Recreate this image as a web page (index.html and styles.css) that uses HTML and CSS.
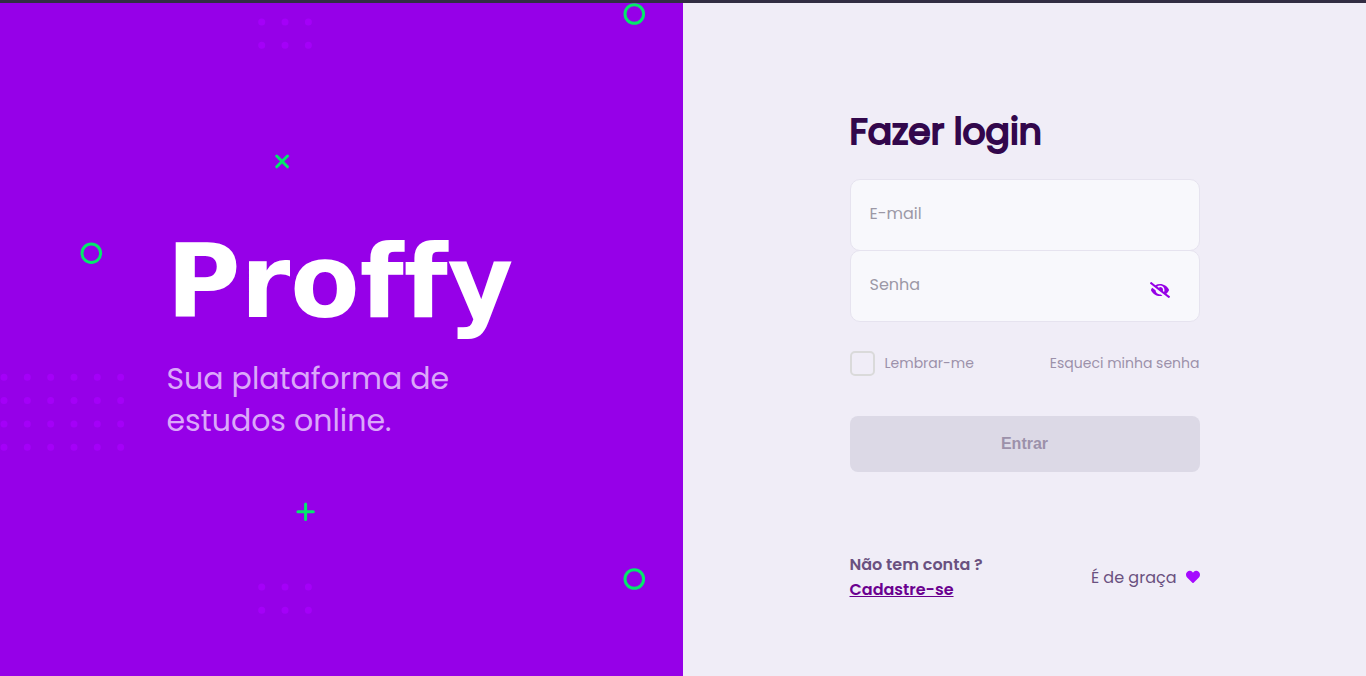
FILE: index.html
```html
<!DOCTYPE html>
<html lang="pt-BR">
<head>
<meta charset="utf-8">
<meta name="viewport" content="width=device-width, initial-scale=1">
<title>Proffy - Login</title>
<link rel="stylesheet" href="styles.css">
</head>
<body>
<div class="page">
  <section class="hero">
    <svg class="hero-shapes" viewBox="0 0 683 673" preserveAspectRatio="xMidYMid slice" aria-hidden="true">
      <g class="dots">
        <path d="M4 374.3H122M4 397.6H122M4 421H122M4 444.3H122"/>
        <path d="M261.7 19H309M261.7 42.3H309"/>
        <path d="M261.7 584H309M261.7 607.3H309"/>
      </g>
      <g class="marks">
        <circle cx="634.3" cy="11" r="9.3"/>
        <circle cx="91.3" cy="250.2" r="9.3"/>
        <circle cx="634.3" cy="576" r="9.3"/>
        <path d="M276.7 153L287.5 163.8M287.5 153L276.7 163.8"/>
        <path d="M305.6 501V516.4M297.9 508.7H313.3"/>
      </g>
    </svg>
    <div class="brand">
      <div class="logo">Proffy</div>
      <p class="tagline">Sua plataforma de<br>estudos online.</p>
    </div>
  </section>
  <main class="login">
    <form class="form">
      <h1 class="title">Fazer login</h1>
      <div class="fields">
        <input class="field" type="email" placeholder="E-mail" aria-label="E-mail">
        <div class="password">
          <input class="field" type="password" placeholder="Senha" aria-label="Senha">
          <button class="toggle" type="button" aria-label="Mostrar senha">
            <svg viewBox="0 0 640 512" width="20" height="16" aria-hidden="true"><path fill="currentColor" d="M320 400c-75.85 0-137.25-58.71-142.9-133.11L72.2 185.82c-13.79 17.3-26.48 35.59-36.72 55.59a32.35 32.35 0 0 0 0 29.19C89.71 376.41 197.07 448 320 448c26.91 0 52.87-4 77.89-10.46L346 397.39a144.13 144.13 0 0 1-26 2.61zm313.82 58.1l-110.55-85.44a331.25 331.25 0 0 0 81.25-102.07 32.35 32.35 0 0 0 0-29.19C550.29 135.59 442.93 64 320 64a308.15 308.15 0 0 0-147.32 37.7L45.46 3.37A16 16 0 0 0 23 6.18L3.37 31.45A16 16 0 0 0 6.18 53.9l588.36 454.73a16 16 0 0 0 22.46-2.81l19.64-25.27a16 16 0 0 0-2.82-22.45zm-183.72-142l-39.3-30.38A94.75 94.75 0 0 0 416 256a94.76 94.76 0 0 0-121.31-92.21A47.65 47.65 0 0 1 304 192a46.64 46.64 0 0 1-1.54 10l-73.61-56.89A142.31 142.31 0 0 1 320 112a143.92 143.92 0 0 1 144 144c0 21.63-5.29 41.79-13.9 60.11z"/></svg>
          </button>
        </div>
      </div>
      <div class="options">
        <label class="remember"><input class="check" type="checkbox">Lembrar-me</label>
        <a class="forgot" href="#">Esqueci minha senha</a>
      </div>
      <button class="submit" type="submit">Entrar</button>
      <footer class="footer">
        <p class="signup">Não tem conta ?<br><a class="signup-link" href="#">Cadastre-se</a></p>
        <p class="free">É de graça
          <svg viewBox="0 0 512 512" width="14" height="14" aria-hidden="true"><path fill="#a50aff" d="M462.3 62.6C407.5 15.9 326 24.3 275.7 76.2L256 96.5l-19.7-20.3C186.1 24.3 104.5 15.9 49.7 62.6c-62.8 53.6-66.1 149.8-9.9 207.9l193.5 199.8c12.5 12.9 32.8 12.9 45.3 0l193.5-199.8c56.3-58.1 53-154.3-9.8-207.9z"/></svg>
        </p>
      </footer>
    </form>
  </main>
</div>
</body>
</html>
```
FILE: styles.css
```css
* {
  box-sizing: border-box;
  margin: 0;
}

body {
  background: #f0edf7;
  font-family: Poppins, Inter, "Open Sans", sans-serif;
}

.page {
  display: grid;
  grid-template-columns: 1fr 1fr;
  min-height: 100vh;
  border-top: 3px solid #322d43;
}

.hero {
  position: relative;
  display: flex;
  align-items: center;
  justify-content: center;
  background: #9600e8;
}

.hero-shapes {
  position: absolute;
  inset: 0;
  width: 100%;
  height: 100%;
  fill: none;
  stroke-linecap: round;
}

.dots {
  stroke: #a400f8;
  stroke-width: 7;
  stroke-dasharray: 0 23.33;
}

.marks {
  stroke: #04e86b;
  stroke-width: 3;
}

.brand {
  position: relative;
  width: 350px;
}

.logo {
  margin-bottom: 32px;
  color: #fff;
  font-family: "DejaVu Sans", sans-serif;
  font-size: 101px;
  font-weight: 700;
  font-variant-ligatures: none;
  line-height: 88px;
}

.tagline {
  color: #dba8fa;
  font-size: 30px;
  font-weight: 400;
  line-height: 42px;
}

.login {
  display: flex;
  justify-content: center;
}

.form {
  width: 350px;
  padding-top: 101px;
}

.title {
  color: #32074c;
  font-size: 36px;
  font-weight: 400;
  line-height: 56px;
  -webkit-text-stroke: 2px #32074c;
}

.fields {
  display: flex;
  flex-direction: column;
  margin-top: 19px;
}

.field {
  display: block;
  width: 100%;
  height: 72px;
  padding: 0 19px 4px;
  border: 1px solid #e6e3ef;
  border-radius: 10px;
  background: #f8f8fc;
  color: #32264d;
  font: inherit;
  font-size: 16px;
}

.field::placeholder {
  color: #9c98a6;
  opacity: 1;
}

.password {
  position: relative;
  margin-top: -1px;
}

.toggle {
  position: absolute;
  top: 32px;
  right: 30px;
  display: flex;
  padding: 0;
  border: 0;
  background: none;
  color: #9600e6;
}

.options {
  display: flex;
  align-items: center;
  justify-content: space-between;
  margin-top: 29px;
  font-size: 14px;
}

.remember {
  display: flex;
  align-items: center;
  gap: 10px;
  color: #9c91aa;
}

.check {
  appearance: none;
  width: 25px;
  height: 25px;
  margin: 0;
  border: 2px solid #dadada;
  border-radius: 5px;
}

.forgot {
  color: #9c91aa;
  text-decoration: none;
}

.submit {
  display: block;
  width: 100%;
  height: 56px;
  margin-top: 40px;
  border: 0;
  border-radius: 8px;
  background: #dcd9e6;
  color: #9c91aa;
  font: bold 16px "Liberation Sans", Arial, sans-serif;
}

.footer {
  display: flex;
  align-items: center;
  justify-content: space-between;
  margin-top: 80px;
  color: #6a5180;
  font-size: 16px;
  line-height: 25px;
}

.signup {
  font-weight: 600;
}

.signup-link {
  color: #6a008f;
}

.free {
  display: flex;
  align-items: center;
  gap: 9px;
}
```
